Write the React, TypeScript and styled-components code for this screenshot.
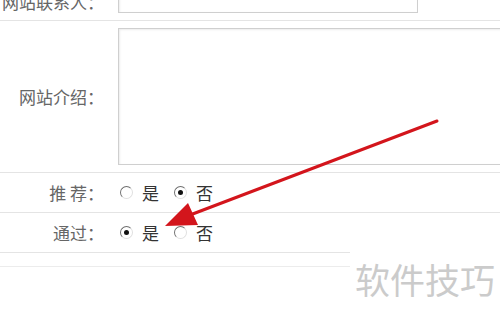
import styled, { createGlobalStyle } from "styled-components"

const GlobalStyle = createGlobalStyle`
  html, body {
    margin: 0;
    padding: 0;
    background: #ffffff;
    overflow: hidden;
  }
  body {
    width: 500px;
    height: 317px;
    font-family: "Noto Sans CJK SC", "Noto Sans", sans-serif;
  }
`

interface RadioOption {
  label: string
  checked: boolean
}

const rows: { label: string; options: RadioOption[] }[] = [
  {
    label: "推 荐：",
    options: [
      { label: "是", checked: false },
      { label: "否", checked: true },
    ],
  },
  {
    label: "通过：",
    options: [
      { label: "是", checked: true },
      { label: "否", checked: false },
    ],
  },
]

const App = () => {
  return (
    <>
      <GlobalStyle />
      <Page>
        <Form>
          <Row>
            <Label>网站联系人：</Label>
            <Field>
              <TextInput type="text" />
            </Field>
          </Row>
          <Row>
            <Label>网站介绍：</Label>
            <Field>
              <TextArea />
            </Field>
          </Row>
          {rows.map((row) => (
            <Row key={row.label} $compact>
              <Label>{row.label}</Label>
              <Field>
                <RadioGroup>
                  {row.options.map((opt) => (
                    <RadioLabel key={opt.label}>
                      <RadioDot $checked={opt.checked} />
                      {opt.label}
                    </RadioLabel>
                  ))}
                </RadioGroup>
              </Field>
            </Row>
          ))}
          <EmptyRow />
        </Form>

        <Arrow width="500" height="317" viewBox="0 0 500 317">
          <line
            x1="437"
            y1="121"
            x2="190"
            y2="215"
            stroke="#d3151c"
            strokeWidth="3"
            strokeLinecap="round"
          />
          <polygon points="165,226 188,203 198,225" fill="#d3151c" />
        </Arrow>

        <Watermark>软件技巧</Watermark>
      </Page>
    </>
  )
}

export default App

const Page = styled.div`
  position: relative;
  width: 500px;
  height: 317px;
  overflow: hidden;
`

const Form = styled.div`
  margin-top: -18px;
  width: 500px;
`

const Row = styled.div<{ $compact?: boolean }>`
  display: grid;
  grid-template-columns: 110px 1fr;
  align-items: center;
  border-bottom: 1px solid #e4e4e4;
  min-height: ${(p) => (p.$compact ? "40px" : "auto")};
  box-sizing: border-box;
`

const EmptyRow = styled.div`
  height: 13px;
  border-bottom: 1px solid #ececec;
`

const Label = styled.div`
  text-align: right;
  padding-right: 6px;
  font-size: 17px;
  color: #666666;
  white-space: nowrap;
`

const Field = styled.div`
  padding: 7px 0 7px 8px;
  display: flex;
  align-items: center;
  min-width: 0;
`

const TextInput = styled.input`
  width: 300px;
  height: 24px;
  box-sizing: border-box;
  border: 1px solid #cfcfcf;
  box-shadow: inset 1px 1px 2px rgba(0, 0, 0, 0.08);
  background: #ffffff;
`

const TextArea = styled.textarea`
  width: 420px;
  height: 137px;
  box-sizing: border-box;
  border: 1px solid #cfcfcf;
  box-shadow: inset 1px 1px 2px rgba(0, 0, 0, 0.08);
  resize: none;
  flex-shrink: 0;
  display: block;
`

const RadioGroup = styled.div`
  display: flex;
  align-items: center;
  gap: 13px;
`

const RadioLabel = styled.label`
  display: inline-flex;
  align-items: center;
  gap: 9px;
  font-size: 17px;
  color: #333333;
`

const RadioDot = styled.span<{ $checked: boolean }>`
  width: 13px;
  height: 13px;
  margin-left: 2px;
  box-sizing: border-box;
  border-radius: 50%;
  border: 1px solid;
  border-color: #6f6f6f #e0e0e0 #e0e0e0 #6f6f6f;
  background: #ffffff;
  display: inline-flex;
  align-items: center;
  justify-content: center;

  &::after {
    content: "";
    width: 5px;
    height: 5px;
    border-radius: 50%;
    background: ${(p) => (p.$checked ? "#111111" : "transparent")};
  }
`

const Arrow = styled.svg`
  position: absolute;
  left: 0;
  top: 0;
  pointer-events: none;
`

const Watermark = styled.div`
  position: absolute;
  left: 350px;
  top: 240px;
  width: 150px;
  height: 77px;
  background: #ffffff;
  box-sizing: border-box;
  padding: 21px 0 0 5px;
  font-size: 35px;
  line-height: 1;
  color: #cbcbcb;
  white-space: nowrap;
`
